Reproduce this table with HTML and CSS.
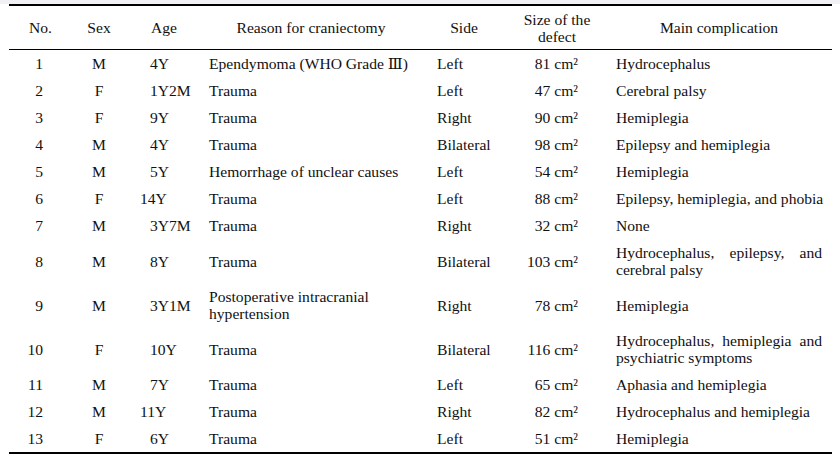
FILE: index.html
```html
<!DOCTYPE html>
<html>
<head>
<meta charset="utf-8">
<link rel="stylesheet" href="styles.css">
</head>
<body>
<div class="strip"></div>
<table class="tbl">
  <colgroup>
    <col class="c1"><col class="c2"><col class="c3"><col class="c4"><col class="c5"><col class="c6"><col class="c7">
  </colgroup>
  <thead>
    <tr>
      <th>No.</th><th>Sex</th><th>Age</th><th>Reason for craniectomy</th><th>Side</th><th>Size of the<br>defect</th><th>Main complication</th>
    </tr>
  </thead>
  <tbody>
    <tr><td class="no">1</td><td class="sex">M</td><td class="age">4Y</td><td class="rsn">Ependymoma (WHO Grade Ⅲ)</td><td class="side">Left</td><td class="size">81 cm²</td><td class="comp">Hydrocephalus</td></tr>
    <tr><td class="no">2</td><td class="sex">F</td><td class="age">1Y2M</td><td class="rsn">Trauma</td><td class="side">Left</td><td class="size">47 cm²</td><td class="comp">Cerebral palsy</td></tr>
    <tr><td class="no">3</td><td class="sex">F</td><td class="age">9Y</td><td class="rsn">Trauma</td><td class="side">Right</td><td class="size">90 cm²</td><td class="comp">Hemiplegia</td></tr>
    <tr><td class="no">4</td><td class="sex">M</td><td class="age">4Y</td><td class="rsn">Trauma</td><td class="side">Bilateral</td><td class="size">98 cm²</td><td class="comp">Epilepsy and hemiplegia</td></tr>
    <tr><td class="no">5</td><td class="sex">M</td><td class="age">5Y</td><td class="rsn">Hemorrhage of unclear causes</td><td class="side">Left</td><td class="size">54 cm²</td><td class="comp">Hemiplegia</td></tr>
    <tr><td class="no">6</td><td class="sex">F</td><td class="age wide">14Y</td><td class="rsn">Trauma</td><td class="side">Left</td><td class="size">88 cm²</td><td class="comp">Epilepsy, hemiplegia, and phobia</td></tr>
    <tr><td class="no">7</td><td class="sex">M</td><td class="age">3Y7M</td><td class="rsn">Trauma</td><td class="side">Right</td><td class="size">32 cm²</td><td class="comp">None</td></tr>
    <tr class="tall"><td class="no">8</td><td class="sex">M</td><td class="age">8Y</td><td class="rsn">Trauma</td><td class="side">Bilateral</td><td class="size">103 cm²</td><td class="comp"><span class="jline">Hydrocephalus, epilepsy, and</span><span class="line">cerebral palsy</span></td></tr>
    <tr class="tall"><td class="no">9</td><td class="sex">M</td><td class="age">3Y1M</td><td class="rsn">Postoperative intracranial<br>hypertension</td><td class="side">Right</td><td class="size">78 cm²</td><td class="comp">Hemiplegia</td></tr>
    <tr class="tall"><td class="no">10</td><td class="sex">F</td><td class="age">10Y</td><td class="rsn">Trauma</td><td class="side">Bilateral</td><td class="size">116 cm²</td><td class="comp"><span class="jline">Hydrocephalus, hemiplegia and</span><span class="line">psychiatric symptoms</span></td></tr>
    <tr><td class="no">11</td><td class="sex">M</td><td class="age">7Y</td><td class="rsn">Trauma</td><td class="side">Left</td><td class="size">65 cm²</td><td class="comp">Aphasia and hemiplegia</td></tr>
    <tr><td class="no">12</td><td class="sex">M</td><td class="age wide">11Y</td><td class="rsn">Trauma</td><td class="side">Right</td><td class="size">82 cm²</td><td class="comp">Hydrocephalus and hemiplegia</td></tr>
    <tr><td class="no">13</td><td class="sex">F</td><td class="age">6Y</td><td class="rsn">Trauma</td><td class="side">Left</td><td class="size">51 cm²</td><td class="comp">Hemiplegia</td></tr>
  </tbody>
</table>
</body>
</html>
```
FILE: styles.css
```css
html, body {
  margin: 0;
  padding: 0;
  background: #ffffff;
}
body {
  font-family: "Liberation Serif", "DejaVu Serif", serif;
  font-size: 15.6px;
  color: #111111;
}
.strip {
  height: 4px;
  background: #f1f1f5;
}
.tbl {
  margin-left: 9px;
  width: 823px;
  table-layout: fixed;
  border-collapse: separate;
  border-spacing: 0;
  border-top: 2px solid #000;
  border-bottom: 2px solid #000;
}
.c1 { width: 63px; }
.c2 { width: 54px; }
.c3 { width: 76px; }
.c4 { width: 218px; }
.c5 { width: 88px; }
.c6 { width: 98px; }
.c7 { width: 226px; }

.tbl th {
  font-weight: normal;
  text-align: center;
  height: 43px;
  padding: 0;
  line-height: 17px;
  border-bottom: 1px solid #000;
  vertical-align: middle;
}
.tbl td {
  height: 27px;
  padding: 0;
  line-height: 17px;
  vertical-align: middle;
  white-space: nowrap;
}
.tbl tr.tall td {
  height: 44px;
}
.no { text-align: right; padding-right: 29px !important; }
.sex { text-align: center; }
.age { text-align: left; padding-left: 24px !important; }
.age.wide { padding-left: 14px !important; }
.rsn { text-align: left; padding-left: 7px !important; }
.side { text-align: left; padding-left: 17px !important; }
.size { text-align: right; padding-right: 28px !important; }
.comp { text-align: left; padding-left: 10px !important; padding-right: 10px !important; }
.jline {
  display: block;
  text-align: justify;
  text-align-last: justify;
}
.line { display: block; }
```
